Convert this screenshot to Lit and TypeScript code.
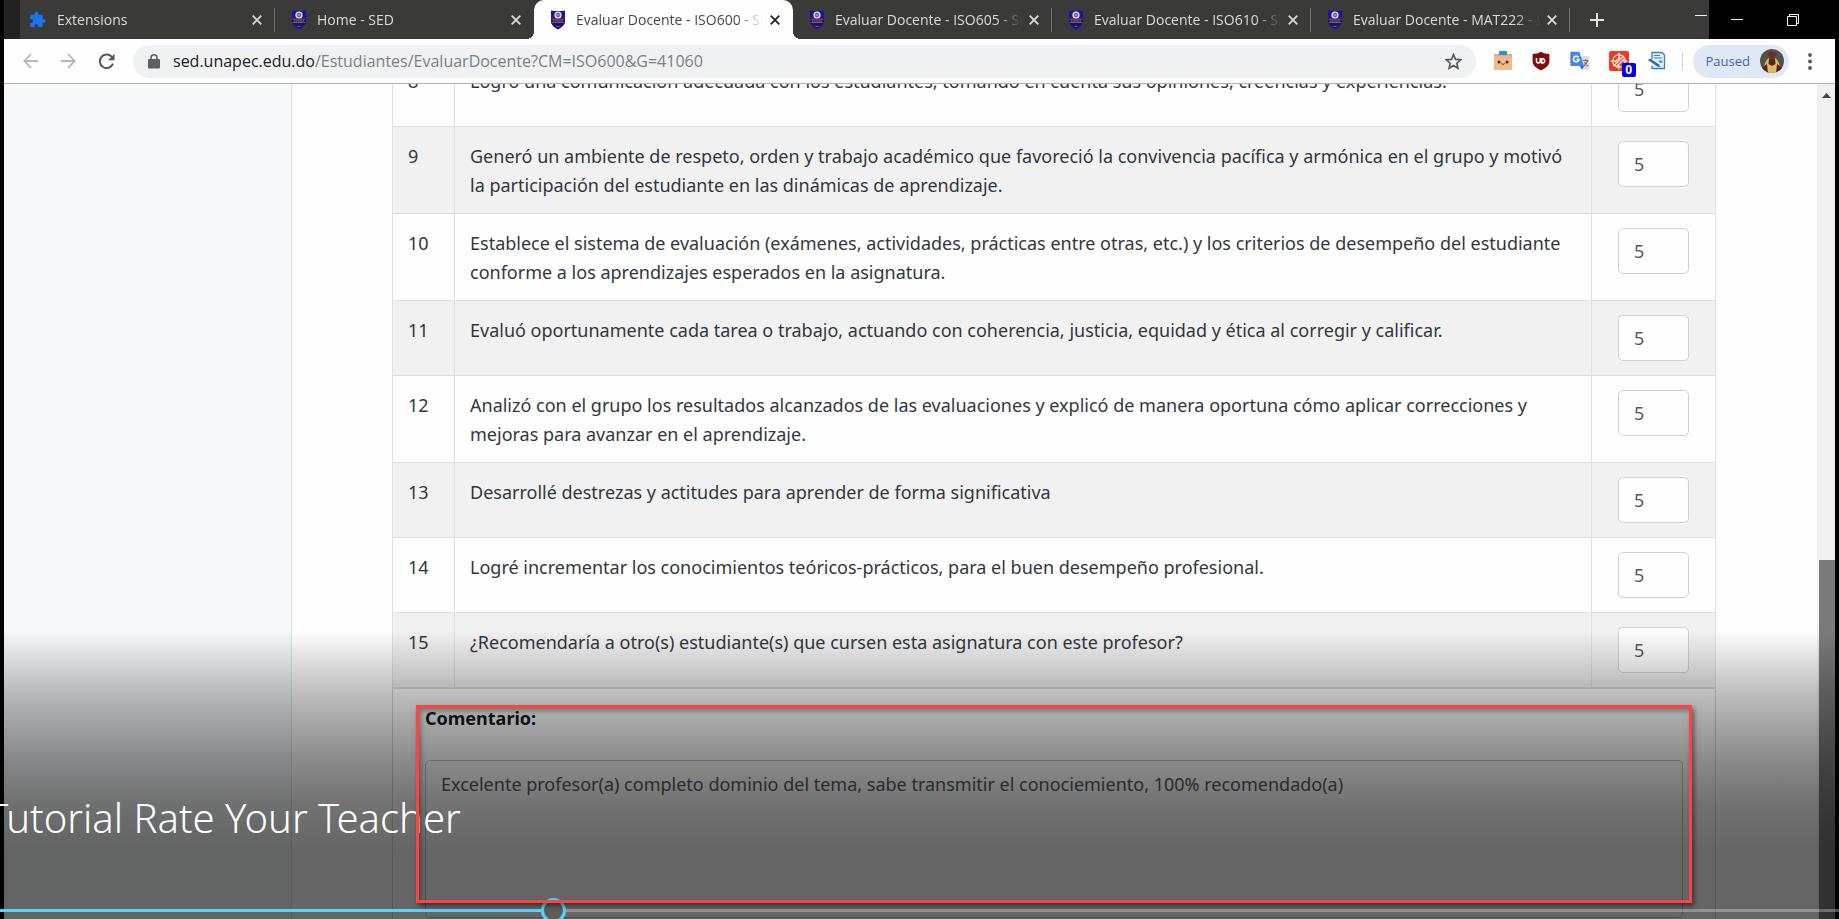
import { LitElement, html, css, svg } from "lit";
import { customElement, property } from "lit/decorators.js";
import { classMap } from "lit/directives/class-map.js";

interface Question {
  id: number;
  text: string;
  score: string;
}

interface Tab {
  title: string;
  extension?: boolean;
  active?: boolean;
  divider?: boolean;
}

const TABS: Tab[] = [
  { title: "Extensions", extension: true, divider: true },
  { title: "Home - SED" },
  { title: "Evaluar Docente - ISO600 - SED", active: true },
  { title: "Evaluar Docente - ISO605 - SED", divider: true },
  { title: "Evaluar Docente - ISO610 - SED", divider: true },
  { title: "Evaluar Docente - MAT222 - SED", divider: true },
];

const QUESTIONS: Question[] = [
  { id: 8, score: "5", text: "Logró una comunicación adecuada con los estudiantes, tomando en cuenta sus opiniones, creencias y experiencias." },
  { id: 9, score: "5", text: "Generó un ambiente de respeto, orden y trabajo académico que favoreció la convivencia pacífica y armónica en el grupo y motivó la participación del estudiante en las dinámicas de aprendizaje." },
  { id: 10, score: "5", text: "Establece el sistema de evaluación (exámenes, actividades, prácticas entre otras, etc.) y los criterios de desempeño del estudiante conforme a los aprendizajes esperados en la asignatura." },
  { id: 11, score: "5", text: "Evaluó oportunamente cada tarea o trabajo, actuando con coherencia, justicia, equidad y ética al corregir y calificar." },
  { id: 12, score: "5", text: "Analizó con el grupo los resultados alcanzados de las evaluaciones y explicó de manera oportuna cómo aplicar correcciones y mejoras para avanzar en el aprendizaje." },
  { id: 13, score: "5", text: "Desarrollé destrezas y actitudes para aprender de forma significativa" },
  { id: 14, score: "5", text: "Logré incrementar los conocimientos teóricos-prácticos, para el buen desempeño profesional." },
  { id: 15, score: "5", text: "¿Recomendaría a otro(s) estudiante(s) que cursen esta asignatura con este profesor?" },
];

const reset = css`
  *, *::before, *::after { box-sizing: border-box; }
  button { margin: 0; padding: 0; border: 0; background: none; color: inherit; font: inherit; }
  input, textarea { margin: 0; font: inherit; }
  svg { display: block; flex: none; }
`;

const puzzle = svg`<svg width="17" height="17" viewBox="1 0 23 23" fill="#1a73e8"><path d="M21 11h-1.500V7a2 2 0 0 0-2-2h-4V3.500a2.500 2.500 0 0 0-5 0V5h-4a2 2 0 0 0-2 2v3.800H4a2.700 2.700 0 0 1 0 5.400H2.500V20a2 2 0 0 0 2 2h3.800v-1.500a2.700 2.700 0 0 1 5.400 0V22h3.800a2 2 0 0 0 2-2v-4H21a2.500 2.500 0 0 0 0-5z"/></svg>`;

const crest = svg`<svg width="16" height="20" viewBox="0 0 16 20">
  <path d="M1 0.500 Q8 1.500 15 0.500 V11 Q15 16 8 19.500 Q1 16 1 11Z" fill="#1414a8"/>
  <path d="M1 9 H15 V12 Q14.500 14 13.500 15 H2.500 Q1.200 13.500 1 12Z" fill="#1d1746"/>
  <path d="M1.500 9.200 H14.500 M1.500 12.500 H14.500" stroke="#a04a4a" stroke-width="1"/>
  <path d="M3 11 H13" stroke="#8b84b8" stroke-width="1.200" stroke-dasharray="1.500 .6"/>
  <circle cx="8" cy="5" r="3.600" fill="#f3e9f3"/>
  <circle cx="8" cy="5" r="1.900" fill="none" stroke="#6c3f98" stroke-width="1"/>
  <path d="M8 3.500 V6.500" stroke="#2a2a90" stroke-width="1"/>
  <path d="M6.500 16.500 H9.500" stroke="#9c4560" stroke-width="1"/>
</svg>`;

@customElement("browser-tabs")
class BrowserTabs extends LitElement {
  static styles = [reset, css`
    :host {
      display: flex;
      height: 39px;
      padding-left: 12px;
      background: linear-gradient(to right, #222221 16px, #3a3a38 16px);
      color: #dcdbd6;
      font: 14px/20px "Open Sans", "Noto Sans", sans-serif;
    }
    .tab {
      position: relative;
      flex: 0 1 259px;
      min-width: 0;
      display: flex;
      align-items: center;
      padding: 0 10px 0 16px;
    }
    .tab.first { padding-left: 13px; }
    .tab.first .title { padding-left: 11px; }
    .tab.active { background: #fefefe; color: #45484c; border-radius: 10px 10px 0 0; }
    .tab.active::before, .tab.active::after {
      content: "";
      position: absolute;
      bottom: 0;
      width: 8px;
      height: 8px;
    }
    .tab.active::before { right: 100%; background: radial-gradient(circle at 0 0, transparent 8px, #fefefe 8px); }
    .tab.active::after { left: 100%; background: radial-gradient(circle at 100% 0, transparent 8px, #fefefe 8px); }
    .tab.divider { background: linear-gradient(#73736f, #73736f) right center / 1px 24px no-repeat; }
    .title {
      flex: 1;
      min-width: 0;
      padding-left: 10px;
      overflow: hidden;
      white-space: nowrap;
      -webkit-mask-image: linear-gradient(to left, transparent 4px, #000 30px);
      mask-image: linear-gradient(to left, transparent 4px, #000 30px);
    }
    .close { display: grid; place-items: center; width: 16px; height: 16px; }
    .active .close { color: #222; }
    .add { display: grid; place-items: center; width: 54px; color: #e4e4e0; }
    .spacer { flex: 1; }
    .ghost { width: 12px; height: 1px; margin: 15px 2px 0 0; background: #f0f0f0; }
    .controls { display: flex; justify-content: space-between; align-items: center; width: 126px; padding: 0 36px 0 22px; background: #000; color: #fff; }
  `];

  render() {
    return html`
      ${TABS.map((tab, i) => html`
        <div class=${classMap({ tab: true, first: i === 0, active: !!tab.active, divider: !!tab.divider })}>
          ${tab.extension ? puzzle : crest}
          <span class="title">${tab.title}</span>
          <button class="close" aria-label="Close tab">
            <svg width="10" height="10" viewBox="0 0 10 10" stroke="currentColor" stroke-width="1.800"><path d="M.7 .7 9.300 9.300M9.300 .7 .7 9.300"/></svg>
          </button>
        </div>`)}
      <button class="add" aria-label="New tab">
        <svg width="14" height="14" viewBox="0 0 14 14" stroke="currentColor" stroke-width="2"><path d="M7 0V14M0 7H14"/></svg>
      </button>
      <span class="spacer"></span>
      <span class="ghost"></span>
      <div class="controls">
        <button aria-label="Minimize"><svg width="12" height="12" viewBox="0 0 12 12" stroke="currentColor"><path d="M0 5.500H12"/></svg></button>
        <button aria-label="Restore"><svg width="12" height="12" viewBox="0 0 12 12" stroke="currentColor" fill="none"><path d="M.5 2.500H9.500V11.500H.5zM2.500 2.500V.5H11.500V9.500H9.500"/></svg></button>
      </div>`;
  }
}

@customElement("browser-toolbar")
class BrowserToolbar extends LitElement {
  static styles = [reset, css`
    :host {
      display: flex;
      align-items: center;
      height: 45px;
      padding: 0 23px 0 7px;
      border-bottom: 1px solid #b2b2b0;
      background: #fefefe;
      font: 16px/22px "Open Sans", "Noto Sans", sans-serif;
    }
    .nav { display: grid; place-items: center; width: 38px; height: 32px; color: #b5b5b5; }
    .nav.on { color: #55585c; }
    .omnibox {
      flex: 1;
      display: flex;
      align-items: center;
      height: 33px;
      margin-left: 8px;
      padding: 0 14px 0 15px;
      border-radius: 17px;
      background: #eff1f2;
      color: #7b8086;
    }
    .url { flex: 1; padding-left: 13px; white-space: nowrap; }
    .host { color: #202124; }
    .extensions { display: grid; grid-template-columns: repeat(5, 1fr); justify-items: center; width: 193px; margin-left: 8px; }
    .ext { position: relative; }
    .count {
      position: absolute;
      left: 13px;
      top: 12px;
      width: 14px;
      height: 14px;
      border-radius: 2px;
      background: #0000f0;
      color: #fff;
      font: 700 12px/14px "Noto Sans", sans-serif;
      text-align: center;
    }
    .rule { width: 1px; height: 18px; margin: 0 10px 0 5px; background: #cfd1d4; }
    .profile {
      display: flex;
      align-items: center;
      gap: 10px;
      height: 33px;
      padding: 0 5px 0 13px;
      border-radius: 17px;
      background: #e0e8f5;
      color: #3367c6;
      font-size: 13px;
    }
    .menu { margin-left: 19px; }
  `];

  render() {
    return html`
      <button class="nav" aria-label="Back"><svg width="15" height="16" viewBox="0 0 15 16" fill="none" stroke="currentColor" stroke-width="1.800"><path d="M15 8H1.500M8 1 1.300 8 8 15"/></svg></button>
      <button class="nav" aria-label="Forward"><svg width="15" height="16" viewBox="0 0 15 16" fill="none" stroke="currentColor" stroke-width="1.800"><path d="M0 8H13.500M7 1 13.700 8 7 15"/></svg></button>
      <button class="nav on" aria-label="Reload"><svg width="17" height="17" viewBox="0 0 17 17"><path d="M14.300 4.500A6.800 6.800 0 1 0 15 10.700" fill="none" stroke="currentColor" stroke-width="2"/><path d="M16.500 .8V7.300H10z" fill="currentColor"/></svg></button>
      <div class="omnibox">
        <svg width="12" height="15" viewBox="0 0 12 15"><rect x="0" y="5" width="12" height="9.500" rx="1.200" fill="#5b5f63"/><path d="M3 5.500V3.800a3 3 0 0 1 6 0V5.500" fill="none" stroke="#5b5f63" stroke-width="1.500"/></svg>
        <span class="url"><span class="host">sed.unapec.edu.do</span>/Estudiantes/EvaluarDocente?CM=ISO600&amp;G=41060</span>
        <button aria-label="Bookmark this page"><svg width="17" height="17" viewBox="0 0 16 16" fill="none" stroke="#55585c" stroke-width="1.500"><path d="M8 1.500 9.900 6 14.800 6.400 11.100 9.600 12.200 14.400 8 11.800 3.800 14.400 4.900 9.600 1.200 6.400 6.100 6Z"/></svg></button>
      </div>
      <div class="extensions">
        <button class="ext" aria-label="Box"><svg width="20" height="20" viewBox="0 0 20 20"><rect x="1" y="3" width="18" height="16" rx="1" fill="#efb98c"/><path d="M1 3H19V5H1z" fill="#e2a878"/><path d="M6 0H14V4H6z" fill="#2a93e6"/><circle cx="6" cy="11" r="1.500" fill="#3a2b22"/><circle cx="14" cy="11" r="1.500" fill="#3a2b22"/><path d="M8.500 12.500Q9.300 14 10 12.800 10.700 14 11.500 12.500" fill="none" stroke="#3a2b22"/></svg></button>
        <button class="ext" aria-label="uBlock"><svg width="18" height="20" viewBox="0 0 18 20"><path d="M9 .8C6.500 2.500 3.500 3 .6 3V10C.6 14.500 4 17 9 19.500 14 17 17.400 14.500 17.400 10V3C14.500 3 11.500 2.500 9 .8Z" fill="#800d0d"/><path d="M4.500 7V10A1.800 1.800 0 0 0 8.300 10V7M9.700 7.700H11A2.200 2.200 0 0 1 11 12H9.700z" fill="none" stroke="#fff" stroke-width="1.500"/></svg></button>
        <button class="ext" aria-label="Translate"><svg width="20" height="20" viewBox="0 0 20 20"><path d="M9 5H18.500Q19.500 5 19.500 6V18.500H13z" fill="#dcdcdc"/><path d="M1 .8H9.500L14 15H1Q.3 15 .3 14V2Q.3 .8 1 .8Z" fill="#4a86e8"/><path d="M10 15H14L12 19z" fill="#2f5fb8"/><path d="M8.500 6.300A2.800 2.800 0 1 0 9 8.600H6.500" fill="none" stroke="#fff" stroke-width="1.500"/><path d="M13 9.500H18.500M15.700 8V9.500M17.500 9.500Q16.500 13.500 13.800 15M14.500 11Q15.500 14 18.300 15" fill="none" stroke="#6b7075" stroke-width="1.100"/></svg></button>
        <button class="ext" aria-label="Target, 0"><svg width="20" height="20" viewBox="0 0 20 20"><rect x="0" y="0" width="20" height="20" rx="2" fill="#ee3a20"/><g fill="none" stroke="#fff" stroke-width="1.100"><circle cx="10" cy="10" r="6.300"/><path d="M10 1.500V7M1.500 10H7M10 18.500V14M18.500 10H14M4.500 15 14.500 5M7 16 16 7M6 11 11 6"/></g></svg><span class="count">0</span></button>
        <button class="ext" aria-label="Notes"><svg width="18" height="20" viewBox="0 0 18 20"><path d="M4 8V1.500H14L16.500 4V17.500H4V15" fill="#e3effa" stroke="#3a80bd" stroke-width="1.300"/><path d="M6 4.500H12M6 7H14" stroke="#3a80bd" stroke-width="1.200"/><path d="M0 9 2 7.500 11 13.500 12.500 16 9.500 15.500z" fill="#2468a5"/><path d="M10 9.500H14.500V12H12z" fill="#5b9bd0"/></svg></button>
      </div>
      <span class="rule"></span>
      <button class="profile">
        <span>Paused</span>
        <svg width="24" height="24" viewBox="0 0 24 24"><defs><clipPath id="round"><circle cx="12" cy="12" r="12"/></clipPath></defs><g clip-path="url(#round)"><path d="M0 0H24V24H0z" fill="#55524d"/><path d="M4 24Q4 11 9 9H15Q20 11 20 24z" fill="#d8bd5c"/><path d="M7 5Q12 0 17 5L16 7H8z" fill="#7a2b26"/><ellipse cx="12" cy="8.500" rx="3" ry="3.500" fill="#5a3a2c"/><path d="M9 10 12 11 15 10 15.500 15 12 17 8.500 15z" fill="#4d2a20"/><path d="M2 19 7 15 8 24H2zM22 19 17 15 16 24H22z" fill="#5f1f22"/></g></svg>
      </button>
      <button class="menu" aria-label="Menu"><svg width="4" height="17" viewBox="0 0 4 17" fill="#55585c"><circle cx="2" cy="2" r="1.900"/><circle cx="2" cy="8.500" r="1.900"/><circle cx="2" cy="15" r="1.900"/></svg></button>`;
  }
}

@customElement("evaluation-form")
class EvaluationForm extends LitElement {
  @property({ type: Array }) questions: Question[] = [];

  static styles = [reset, css`
    :host { display: block; font: 18px/29px "Noto Sans", "Open Sans", sans-serif; color: #32373d; }
    .scores { width: 100%; border-collapse: collapse; table-layout: fixed; }
    .num { width: 62px; }
    .score { width: 124px; }
    td { padding: 15px 15px 13px; border: 1px solid #dedfe0; vertical-align: top; }
    td.value { padding: 14px 26px; line-height: 0; }
    tr:nth-child(even) td { background: #f1f1f1; }
    .box, .comment-box {
      display: block;
      width: 100%;
      border: 1px solid #cfd1d3;
      border-radius: 5px;
      background: #fefefe;
      color: #54595f;
      line-height: 29px;
    }
    .box { height: 46px; padding: 0 15px; }
    .comment {
      position: relative;
      padding: 15px 32px 40px;
      border: 1px solid #d4d5d6;
      border-bottom: 0;
      border-top-color: #dedfe0;
    }
    .label { display: block; margin-bottom: 27px; font-weight: 700; color: #15181c; }
    .comment-box { height: 158px; padding: 9px 15px; resize: none; border-color: #c2c4c6; }
    .highlight {
      position: absolute;
      z-index: 3;
      top: 16px;
      left: 23px;
      right: 23px;
      height: 198px;
      border: 3px solid #ff4343;
      box-shadow: 2px 3px 5px rgba(0, 0, 0, .5), inset 2px 3px 5px rgba(0, 0, 0, .35);
      pointer-events: none;
    }
  `];

  render() {
    return html`
      <table class="scores">
        <colgroup><col class="num"><col><col class="score"></colgroup>
        <tbody>
          ${this.questions.map((q) => html`
            <tr>
              <td>${q.id}</td>
              <td>${q.text}</td>
              <td class="value"><input class="box" inputmode="numeric" aria-label="Pregunta ${q.id}" .value=${q.score}></td>
            </tr>`)}
        </tbody>
      </table>
      <div class="comment">
        <label class="label" for="comment">Comentario:</label>
        <textarea class="comment-box" id="comment" spellcheck="false" .value=${"Excelente profesor(a) completo dominio del tema, sabe transmitir el conociemiento, 100% recomendado(a)"}></textarea>
        <div class="highlight"></div>
      </div>`;
  }
}

@customElement("app-root")
class AppRoot extends LitElement {
  static styles = [reset, css`
    :host {
      position: relative;
      display: flex;
      flex-direction: column;
      height: 100vh;
      padding: 0 4px;
      overflow: hidden;
      background: #000;
    }
    browser-tabs, browser-toolbar { flex: none; }
    .page { flex: 1; min-height: 0; display: flex; overflow: hidden; background: #fefefe; }
    .sidebar { flex: none; width: 288px; border-right: 1px solid #dde0e3; background: #f5f9fa; }
    .content { flex: 1; min-width: 0; padding: 0 101px 0 100px; }
    .form { margin-top: -33px; }
    .scrollbar { flex: none; display: flex; flex-direction: column; justify-content: space-between; width: 18px; background: #f0f0ef; }
    .up { display: grid; place-items: center; height: 22px; }
    .thumb { height: 43%; margin-left: 2px; background: #7b7b79; }
    .shade {
      position: absolute;
      z-index: 1;
      inset: auto 0 0;
      height: 294px;
      pointer-events: none;
      background: linear-gradient(
        rgba(0, 0, 0, 0) 5px,
        rgba(0, 0, 0, .13) 37px,
        rgba(0, 0, 0, .25) 67px,
        rgba(0, 0, 0, .34) 96px,
        rgba(0, 0, 0, .46) 136px,
        rgba(0, 0, 0, .55) 179px,
        rgba(0, 0, 0, .6) 226px
      );
    }
    .title {
      position: absolute;
      z-index: 2;
      left: -13px;
      bottom: 73px;
      margin: 0;
      color: #fff;
      font: 300 40px/56px "Noto Sans", "Open Sans", sans-serif;
      white-space: nowrap;
    }
    .seek {
      position: absolute;
      z-index: 2;
      left: 0;
      bottom: -4px;
      width: 100%;
      height: 25px;
      margin: 0;
      background: linear-gradient(to right, #58d5fb 29.500%, rgba(255, 255, 255, .3) 29.500%) center / 100% 3px no-repeat;
      -webkit-appearance: none;
      appearance: none;
    }
    .seek::-webkit-slider-thumb {
      -webkit-appearance: none;
      width: 25px;
      height: 25px;
      border: 3px solid #58d5fb;
      border-radius: 50%;
      background: #5d5d5b;
    }
  `];

  render() {
    return html`
      <browser-tabs></browser-tabs>
      <browser-toolbar></browser-toolbar>
      <div class="page">
        <aside class="sidebar"></aside>
        <main class="content"><evaluation-form class="form" .questions=${QUESTIONS}></evaluation-form></main>
        <div class="scrollbar">
          <button class="up" aria-label="Scroll up"><svg width="9" height="5" viewBox="0 0 9 5"><path d="M0 5 4.500 0 9 5z" fill="#444"/></svg></button>
          <div class="thumb"></div>
        </div>
      </div>
      <div class="shade"></div>
      <h1 class="title">Tutorial Rate Your Teacher</h1>
      <input class="seek" type="range" aria-label="Seek" min="0" max="1000" value="298">`;
  }
}
